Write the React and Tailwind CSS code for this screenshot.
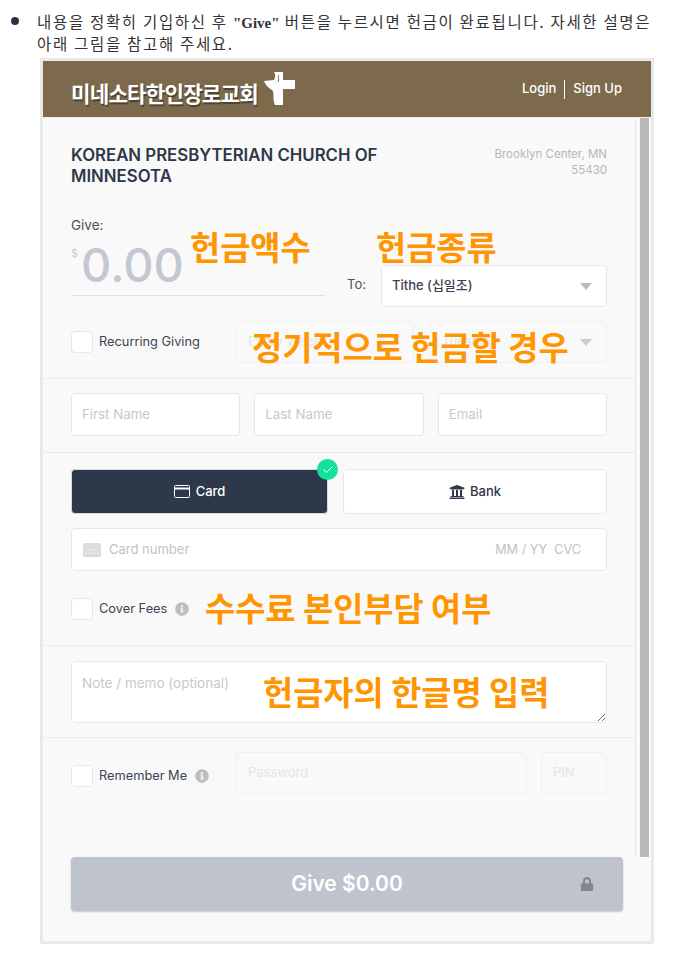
import { FaInfoCircle, FaLock, FaUniversity } from 'react-icons/fa'
import { FiCheck } from 'react-icons/fi'

const sans = "font-['Inter','Noto_Sans_CJK_KR',sans-serif]"
const kr = "font-['Noto_Sans_CJK_KR',sans-serif]"
const field = 'rounded border border-[#e6e7ea] bg-white'
const ghost = 'rounded border border-[#f0f0f1] bg-[#f9f9f9]'

function Callout({ className, children }) {
  return (
    <span className={`absolute whitespace-nowrap text-[32.800px] text-[#ff9500] font-bold leading-none ${kr} ${className}`}>
      {children}
    </span>
  )
}

function Check({ label, info }) {
  return (
    <div className="flex items-center">
      <span className={`size-[22px] shrink-0 ${field}`} />
      <span className="ml-[6px] whitespace-nowrap text-[12.800px] text-[#3a4454]">{label}</span>
      {info && <FaInfoCircle className="ml-[8px] size-[14px] text-[#bcbec2]" />}
    </div>
  )
}

function Caret({ className = '' }) {
  return <span className={`size-0 border-x-[6px] border-t-[7px] border-x-transparent ${className}`} />
}

function Divider() {
  return <div className="h-px bg-[#ebebeb]" />
}

function Input({ label, className = '' }) {
  return (
    <div className={`flex h-[43px] items-center px-[10px] text-[13.300px] text-[#c6c8d0] ${field} ${className}`}>
      {label}
    </div>
  )
}

function Logo() {
  return (
    <svg viewBox="0 0 32 34" className="ml-[6px] h-[34px] w-[32px] -translate-y-[4px]" fill="#fff">
      <path d="M10 0H19V8H31V17H19V33H11C8 26 11 21 8 18C5 16 2 14 0 9L10 8C11 6 12 3 10 0Z" />
      <path d="M15 3C13 5 16 7 14 10" fill="none" stroke="#7d6a4d" strokeWidth="1" />
    </svg>
  )
}

export default function App() {
  return (
    <div className="h-[959px] w-[678px] overflow-hidden bg-white">
      <div className={`relative h-[54px] whitespace-nowrap pt-[10px] pl-[37px] text-[15.500px] leading-[22px] tracking-[1.680px] text-[#333338] ${kr}`}>
        <span className="absolute left-[11px] top-[17px] size-[8px] rounded-full bg-[#2c3145]" />
        내용을 정확히 기입하신 후 <b className="font-['Liberation_Serif',serif] text-[15px] leading-none tracking-normal">"Give"</b> 버튼을 누르시면 헌금이 완료됩니다. 자세한 설명은
        <br />
        아래 그림을 참고해 주세요.
      </div>

      <div className={`relative mt-[4px] ml-[40px] w-[614px] border-[3px] border-[#e9e9e9] bg-[#f9f9f9] ${sans}`}>
        <header className="flex h-[57px] items-center justify-between bg-[#7d6a4d] pl-[28px] pr-[29px] border-b border-[#efefef]">
          <div className="flex items-center pt-[8px]">
            <span className={`text-[21.200px] font-bold tracking-[-0.8px] text-white [text-shadow:1px_2px_1px_#4b4030] ${kr}`}>미네소타한인장로교회</span>
            <Logo />
          </div>
          <div className="flex items-center text-[13px] font-medium text-white">
            <span>Login</span>
            <span className="mx-[8px] h-[19px] w-px bg-white" />
            <span>Sign Up</span>
          </div>
        </header>

        <div className="flex h-[739px]">
          <div className="min-w-0 flex-1 border-r border-[#e8e8e8]">
            <div className="h-[260px] px-[28px] pt-[27px]">
              <div className="flex justify-between">
                <h1 className="w-[340px] text-[16.800px] font-semibold leading-[21px] text-[#2d3748]">
                  KOREAN PRESBYTERIAN CHURCH OF MINNESOTA
                </h1>
                <p className="pt-px text-right text-[11.500px] leading-[16px] text-[#b4b6ba]">
                  Brooklyn Center, MN
                  <br />
                  55430
                </p>
              </div>
              <div className="mt-[30px] flex items-end">
                <div className="w-[254px] border-b border-[#dfe0e3]">
                  <div className="text-[13.500px] leading-[16px] text-[#4a5160]">Give:</div>
                  <div className="flex h-[62px] items-start pt-[5px]">
                    <span className="mt-[7px] text-[11px] text-[#c6cad3]">$</span>
                    <span className="ml-[3px] text-[47px] font-medium leading-[54px] text-[#c3c7d1]">0.00</span>
                  </div>
                </div>
                <span className="mb-[2px] ml-[22px] w-[34px] text-[13px] text-[#4a5160]">To:</span>
                <div className={`-mb-[11px] flex h-[42px] flex-1 items-center justify-between pl-[10px] pr-[14px] text-[13px] font-medium text-[#3a4454] ${field}`}>
                  <span>Tithe (십일조)</span>
                  <Caret className="border-t-[#b9bcc3]" />
                </div>
              </div>
              <div className="mt-[25px] flex items-center">
                <div className="w-[165px]">
                  <Check label="Recurring Giving" />
                </div>
                <div className={`flex h-[42px] w-[178px] items-center px-[11px] text-[13px] text-[#e4e5e8] ${ghost}`}>Every Week</div>
                <div className={`ml-[16px] flex h-[42px] flex-1 items-center justify-between pl-[11px] pr-[14px] text-[13px] text-[#e4e5e8] ${ghost}`}>
                  <span>Tuesday</span>
                  <Caret className="border-t-[#c9ccd2]" />
                </div>
              </div>
            </div>
            <Divider />
            <div className="grid h-[73px] grid-cols-3 gap-x-[14px] px-[28px] pt-[14px]">
              <Input label="First Name" />
              <Input label="Last Name" />
              <Input label="Email" />
            </div>
            <Divider />
            <div className="h-[192px] px-[28px] pt-[16px]">
              <div className="flex h-[45px] gap-[15px]">
                <div className="relative flex w-[257px] items-center justify-center gap-[6px] rounded bg-[#2d384b] text-[13px] font-medium text-white border border-[#d8d9dc]">
                  <svg viewBox="0 0 16 13" className="h-[13px] w-[16px]" fill="none" stroke="currentColor" strokeWidth="1">
                    <rect x="0.500" y="0.500" width="15" height="12" rx="1" />
                    <path d="M0.500 3.500h15" strokeWidth="2" />
                  </svg>
                  Card
                  <span className="absolute -right-[11px] -top-[11px] flex size-[21px] items-center justify-center rounded-full bg-[#13e29c]">
                    <FiCheck className="size-[12px] text-white" />
                  </span>
                </div>
                <div className={`flex flex-1 items-center justify-center gap-[5px] text-[13px] font-medium text-[#2d3748] ${field}`}>
                  <FaUniversity className="size-[16px]" />
                  Bank
                </div>
              </div>
              <div className={`mt-[14px] flex h-[43px] items-center justify-between pl-[11px] pr-[25px] text-[13px] text-[#c0c2c7] ${field}`}>
                <div className="flex items-center gap-[8px]">
                  <svg viewBox="0 0 18 14" className="h-[14px] w-[18px]" fill="#dcdcdc">
                    <rect width="18" height="14" rx="1.500" />
                    <path d="M2 7h14M2 10h14" stroke="#f4f4f4" strokeDasharray="1.500 1" />
                  </svg>
                  Card number
                </div>
                <span className="text-[12.700px]">MM / YY&nbsp;&nbsp;CVC</span>
              </div>
              <div className="mt-[27px]">
                <Check label="Cover Fees" info />
              </div>
            </div>
            <Divider />
            <div className="h-[91px] px-[28px] pt-[15px]">
              <textarea
                readOnly
                placeholder="Note / memo (optional)"
                className={`block h-[62px] w-full resize-y px-[10px] py-[11px] text-[13.500px] outline-none placeholder:text-[#c6c8d0] ${field}`}
              />
            </div>
            <Divider />
            <div className="flex items-start px-[28px] pt-[14px]">
              <div className="w-[165px] pt-[13px]">
                <Check label="Remember Me" info />
              </div>
              <div className={`flex h-[42px] flex-1 items-center px-[11px] text-[13px] text-[#e4e5e8] ${ghost}`}>Password</div>
              <div className={`ml-[14px] flex h-[42px] w-[66px] items-center px-[11px] text-[13px] text-[#e4e5e8] ${ghost}`}>PIN</div>
            </div>
          </div>
          <div className="ml-[4px] mr-[2px] w-[9px] bg-[#b9b9b9]" />
        </div>

        <div className="px-[28px] pb-[30px]">
          <div className="relative flex h-[54px] items-center justify-center rounded bg-[#bfc3cd] text-[21px] font-semibold text-white shadow-[0_1px_2px_rgba(0,0,0,0.2)]">
            Give $0.00
            <FaLock className="absolute right-[29px] size-[14px] text-[#85868b]" />
          </div>
        </div>

        <Callout className="left-[147px] top-[169px]">헌금액수</Callout>
        <Callout className="left-[333px] top-[169px]">헌금종류</Callout>
        <Callout className="left-[209px] top-[269px]">정기적으로 헌금할 경우</Callout>
        <Callout className="left-[162px] top-[530px]">수수료 본인부담 여부</Callout>
        <Callout className="left-[220px] top-[614px]">헌금자의 한글명 입력</Callout>
      </div>
    </div>
  )
}
